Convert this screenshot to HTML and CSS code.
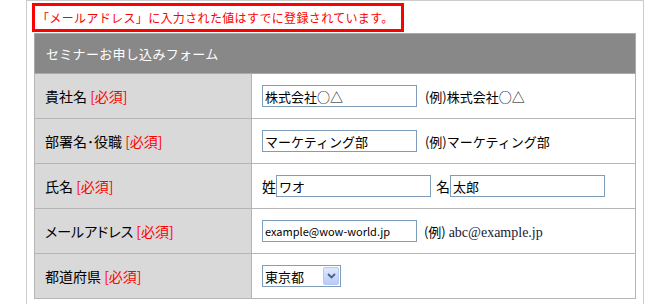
FILE: index.html
```html
<!DOCTYPE html>
<html lang="ja">
<head>
    <meta charset="UTF-8">
    <meta name="viewport" content="width=device-width, initial-scale=1.0">
    <title>セミナーお申し込みフォーム</title>
    <link rel="stylesheet" href="styles.css">
</head>
<body>
    <div class="form-container">
        <p class="error-message">「メールアドレス」に入力された値はすでに登録されています。</p>
        <table class="entry-table">
            <tr>
                <th colspan="2" class="table-title">セミナーお申し込みフォーム</th>
            </tr>
            <tr>
                <td class="label">貴社名 <span class="required">[必須]</span></td>
                <td class="field">
                    <input type="text" class="input-text" value="株式会社○△">
                    <span class="example">(例)株式会社○△</span>
                </td>
            </tr>
            <tr>
                <td class="label">部署名･役職 <span class="required">[必須]</span></td>
                <td class="field">
                    <input type="text" class="input-text" value="マーケティング部">
                    <span class="example">(例)マーケティング部</span>
                </td>
            </tr>
            <tr>
                <td class="label">氏名 <span class="required">[必須]</span></td>
                <td class="field">
                    <span class="name-label">姓</span><input type="text" class="input-text input-name" value="ワオ">
                    <span class="name-label name-gap">名</span><input type="text" class="input-text input-name" value="太郎">
                </td>
            </tr>
            <tr>
                <td class="label">メールアドレス <span class="required">[必須]</span></td>
                <td class="field">
                    <input type="text" class="input-text input-mail" value="example@wow-world.jp">
                    <span class="example example-mail">(例) <span class="mail-sample">abc@example.jp</span></span>
                </td>
            </tr>
            <tr>
                <td class="label">都道府県 <span class="required">[必須]</span></td>
                <td class="field">
                    <div class="select-box">
                        <span class="select-value">東京都</span>
                        <span class="select-button">
                            <svg width="9" height="6" viewBox="0 0 9 6">
                                <path d="M1 1 L4.5 4.5 L8 1" fill="none" stroke="#4d6185" stroke-width="1.8"/>
                            </svg>
                        </span>
                    </div>
                </td>
            </tr>
        </table>
    </div>
</body>
</html>
```

FILE: styles.css
```css
body {
    margin: 0;
    background-color: #fff;
    font-family: "Noto Sans CJK JP", sans-serif;
    color: #000;
}
.form-container {
    width: 616px;
    margin-left: 26px;
    border: 1px solid #cccccc;
    padding: 2px 0 5px 0;
}
.error-message {
    display: inline-block;
    margin: 0 0 1px 5px;
    padding: 1px 7px 1px 2px;
    border: 3px solid #ff0000;
    color: #ff0000;
    font-size: 12px;
    letter-spacing: 0.35px;
    line-height: 21px;
}
.entry-table {
    width: 602px;
    margin-left: 7px;
    border-collapse: collapse;
    font-size: 13px;
}
.table-title {
    height: 39px;
    padding: 0 0 0 11px;
    text-align: left;
    font-weight: normal;
    font-size: 13px;
    letter-spacing: 0.3px;
    color: #fff;
    background-color: #888888;
    border: 1px solid #aaaaaa;
}
.entry-table td {
    height: 44px;
    padding: 0;
    border: 1px solid #b5b5b5;
}
.label {
    width: 206px;
    padding-left: 10px !important;
    background-color: #d9d9d9;
    font-size: 14px;
    font-feature-settings: "palt";
}
.required {
    color: #ff0000;
}
.field {
    padding-left: 10px !important;
    background-color: #fff;
    white-space: nowrap;
}
.input-text {
    box-sizing: border-box;
    width: 155px;
    height: 22px;
    margin: 0;
    padding: 0 2px;
    border: 1px solid #7f9db9;
    font-family: "Noto Sans CJK JP", sans-serif;
    font-size: 13px;
    vertical-align: middle;
}
.example {
    margin-left: 5px;
    font-size: 13px;
    vertical-align: middle;
}
.name-label {
    font-size: 14px;
    vertical-align: middle;
}
.name-gap {
    margin-left: 2px;
}
.input-mail {
    font-size: 11px;
}
.example-mail {
    margin-left: 4px;
}
.mail-sample {
    font-family: "Liberation Serif", serif;
    font-size: 14px;
    color: #1a1a33;
}
.select-box {
    display: flex;
    align-items: center;
    justify-content: space-between;
    box-sizing: border-box;
    width: 79px;
    height: 22px;
    border: 1px solid #7f9db9;
    background-color: #fff;
}
.select-value {
    padding-left: 2px;
    font-size: 13px;
}
.select-button {
    display: flex;
    align-items: center;
    justify-content: center;
    box-sizing: border-box;
    width: 16px;
    height: 18px;
    margin-right: 1px;
    background: linear-gradient(#dfe8fd, #b8cbf8);
    border: 1px solid #b7c8f2;
    border-radius: 2px;
}
```
